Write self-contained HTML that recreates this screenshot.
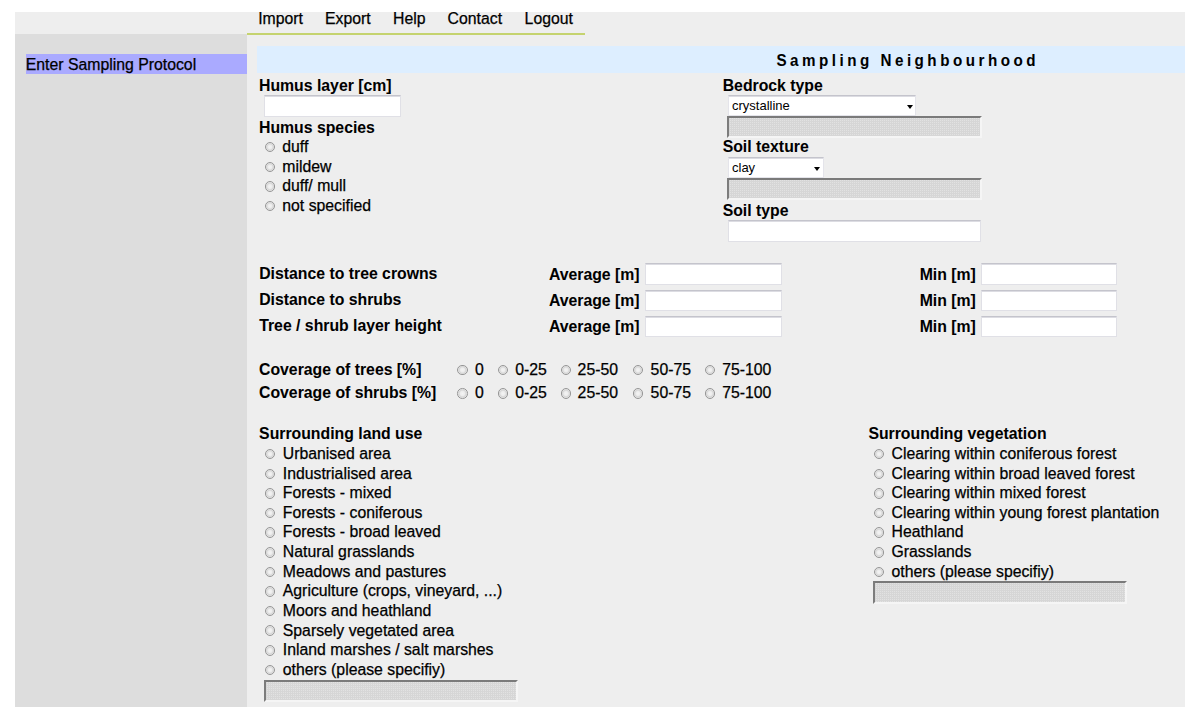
<!DOCTYPE html><html><head><meta charset="utf-8"><style>
*{margin:0;padding:0;box-sizing:border-box}
html,body{width:1200px;height:719px;background:#fff;overflow:hidden;position:relative}
body{font-family:"Liberation Sans",sans-serif;color:#000}
.t{position:absolute;line-height:1;white-space:nowrap;-webkit-text-stroke:0.25px #000}
.topbar{position:absolute;background:#eeeeee}
.side{position:absolute;background:#dddddd}
.main{position:absolute;background:#eeeeee}
.uline{position:absolute;background:#c5d36f;height:2px}
.hl{position:absolute;background:#aaaaff}
.band{position:absolute;background:#ddeeff}
.inp{position:absolute;background:#fff;border:1px solid #e0e0e6;border-top:1px solid #c4c4cc;box-shadow:inset 0 1px 0 #dcdce2}
.dis{position:absolute;background-color:#d6d6d6;background-image:conic-gradient(#e2e2e2 25%,transparent 0);background-size:2px 2px;border-top:2px solid #7a7a7a;border-left:2px solid #7c7c7c;border-right:2px solid #f5f5f5;border-bottom:2px solid #f5f5f5}
.sel{position:absolute;background:#fff;border:1px solid #e4e4ea;border-top:1px solid #c4c4cc;box-shadow:inset 0 1px 0 #dcdce2}
.sel span{position:absolute;left:3px;top:3px;font-size:13px;line-height:1}
.sel i{position:absolute;right:2.5px;top:9px;width:0;height:0;border-left:3.5px solid transparent;border-right:3.5px solid transparent;border-top:4px solid #000}
.r{position:absolute;width:10.5px;height:10.5px;border-radius:50%;border:1.5px solid #969696;background:radial-gradient(circle at 50% 50%,#f4f4f4 0,#ececec 35%,#d6d6d6 55%,#ebebeb 75%,#dcdcdc 100%)}
</style></head><body>
<div class="topbar" style="left:15.00px;top:12.00px;width:1170.00px;height:22.00px"></div>
<div class="side" style="left:15.00px;top:34.00px;width:232.00px;height:673.00px"></div>
<div class="main" style="left:247.00px;top:34.00px;width:938.00px;height:673.00px"></div>
<div class="uline" style="left:247.00px;top:33.00px;width:338.00px;height:2.00px"></div>
<div class="hl" style="left:26.00px;top:54.00px;width:221.00px;height:20.00px"></div>
<div class="band" style="left:257.00px;top:46.00px;width:928.00px;height:26.50px"></div>
<div class="t" style="left:258.20px;top:11.00px;font-size:15.8px;">Import</div>
<div class="t" style="left:325.05px;top:11.00px;font-size:15.8px;">Export</div>
<div class="t" style="left:393.10px;top:11.00px;font-size:15.8px;">Help</div>
<div class="t" style="left:447.60px;top:11.00px;font-size:15.8px;">Contact</div>
<div class="t" style="left:524.60px;top:11.00px;font-size:15.8px;">Logout</div>
<div class="t" style="left:25.80px;top:57.00px;font-size:15.8px;">Enter Sampling Protocol</div>
<div class="t" style="left:776.40px;top:53.00px;font-size:15.2px;font-weight:bold;-webkit-text-stroke:0.05px #000;letter-spacing:3.5px;transform:scaleY(1.1);transform-origin:0 12px;">Sampling Neighbourhood</div>
<div class="t" style="left:259.00px;top:78.00px;font-size:15.8px;font-weight:bold;-webkit-text-stroke:0.05px #000;">Humus layer [cm]</div>
<div class="inp" style="left:264.00px;top:95.00px;width:137.00px;height:22.00px"></div>
<div class="t" style="left:259.00px;top:120.00px;font-size:15.8px;font-weight:bold;-webkit-text-stroke:0.05px #000;">Humus species</div>
<div class="r" style="left:264.80px;top:141.90px"></div>
<div class="t" style="left:282.30px;top:139.00px;font-size:15.8px;">duff</div>
<div class="r" style="left:264.80px;top:161.52px"></div>
<div class="t" style="left:282.30px;top:159.00px;font-size:15.8px;">mildew</div>
<div class="r" style="left:264.80px;top:181.14px"></div>
<div class="t" style="left:282.30px;top:178.00px;font-size:15.8px;">duff/ mull</div>
<div class="r" style="left:264.80px;top:200.76px"></div>
<div class="t" style="left:282.30px;top:198.00px;font-size:15.8px;">not specified</div>
<div class="t" style="left:722.70px;top:78.00px;font-size:15.8px;font-weight:bold;-webkit-text-stroke:0.05px #000;">Bedrock type</div>
<div class="sel" style="left:728px;top:95px;width:188px;height:21px"><span>crystalline</span><i></i></div>
<div class="dis" style="left:727.00px;top:116.00px;width:255.00px;height:22.00px"></div>
<div class="t" style="left:722.70px;top:139.00px;font-size:15.8px;font-weight:bold;-webkit-text-stroke:0.05px #000;">Soil texture</div>
<div class="sel" style="left:728px;top:157px;width:95.5px;height:20.5px"><span>clay</span><i></i></div>
<div class="dis" style="left:727.00px;top:178.00px;width:255.00px;height:22.00px"></div>
<div class="t" style="left:722.70px;top:203.00px;font-size:15.8px;font-weight:bold;-webkit-text-stroke:0.05px #000;">Soil type</div>
<div class="inp" style="left:728.00px;top:220.00px;width:253.00px;height:22.00px"></div>
<div class="t" style="left:259.20px;top:266.00px;font-size:15.8px;font-weight:bold;-webkit-text-stroke:0.05px #000;">Distance to tree crowns</div>
<div class="t" style="left:548.90px;top:267.00px;font-size:15.8px;font-weight:bold;-webkit-text-stroke:0.05px #000;">Average [m]</div>
<div class="inp" style="left:644.60px;top:263.00px;width:137.40px;height:22.00px"></div>
<div class="t" style="left:919.70px;top:267.00px;font-size:15.8px;font-weight:bold;-webkit-text-stroke:0.05px #000;">Min [m]</div>
<div class="inp" style="left:980.70px;top:263.00px;width:136.80px;height:22.00px"></div>
<div class="t" style="left:259.20px;top:292.00px;font-size:15.8px;font-weight:bold;-webkit-text-stroke:0.05px #000;">Distance to shrubs</div>
<div class="t" style="left:548.90px;top:293.00px;font-size:15.8px;font-weight:bold;-webkit-text-stroke:0.05px #000;">Average [m]</div>
<div class="inp" style="left:644.60px;top:289.50px;width:137.40px;height:21.80px"></div>
<div class="t" style="left:919.70px;top:293.00px;font-size:15.8px;font-weight:bold;-webkit-text-stroke:0.05px #000;">Min [m]</div>
<div class="inp" style="left:980.70px;top:289.50px;width:136.80px;height:21.80px"></div>
<div class="t" style="left:259.20px;top:318.00px;font-size:15.8px;font-weight:bold;-webkit-text-stroke:0.05px #000;">Tree / shrub layer height</div>
<div class="t" style="left:548.90px;top:319.00px;font-size:15.8px;font-weight:bold;-webkit-text-stroke:0.05px #000;">Average [m]</div>
<div class="inp" style="left:644.60px;top:315.80px;width:137.40px;height:21.70px"></div>
<div class="t" style="left:919.70px;top:319.00px;font-size:15.8px;font-weight:bold;-webkit-text-stroke:0.05px #000;">Min [m]</div>
<div class="inp" style="left:980.70px;top:315.80px;width:136.80px;height:21.70px"></div>
<div class="t" style="left:259.00px;top:362.00px;font-size:15.8px;font-weight:bold;-webkit-text-stroke:0.05px #000;">Coverage of trees [%]</div>
<div class="r" style="left:457.00px;top:364.70px"></div>
<div class="t" style="left:474.90px;top:362.00px;font-size:15.8px;">0</div>
<div class="r" style="left:497.70px;top:364.70px"></div>
<div class="t" style="left:515.20px;top:362.00px;font-size:15.8px;">0-25</div>
<div class="r" style="left:560.60px;top:364.70px"></div>
<div class="t" style="left:577.60px;top:362.00px;font-size:15.8px;">25-50</div>
<div class="r" style="left:632.60px;top:364.70px"></div>
<div class="t" style="left:650.60px;top:362.00px;font-size:15.8px;">50-75</div>
<div class="r" style="left:704.50px;top:364.70px"></div>
<div class="t" style="left:722.20px;top:362.00px;font-size:15.8px;">75-100</div>
<div class="t" style="left:259.00px;top:385.00px;font-size:15.8px;font-weight:bold;-webkit-text-stroke:0.05px #000;">Coverage of shrubs [%]</div>
<div class="r" style="left:457.00px;top:388.20px"></div>
<div class="t" style="left:474.90px;top:385.00px;font-size:15.8px;">0</div>
<div class="r" style="left:497.70px;top:388.20px"></div>
<div class="t" style="left:515.20px;top:385.00px;font-size:15.8px;">0-25</div>
<div class="r" style="left:560.60px;top:388.20px"></div>
<div class="t" style="left:577.60px;top:385.00px;font-size:15.8px;">25-50</div>
<div class="r" style="left:632.60px;top:388.20px"></div>
<div class="t" style="left:650.60px;top:385.00px;font-size:15.8px;">50-75</div>
<div class="r" style="left:704.50px;top:388.20px"></div>
<div class="t" style="left:722.20px;top:385.00px;font-size:15.8px;">75-100</div>
<div class="t" style="left:259.10px;top:426.00px;font-size:15.8px;font-weight:bold;-webkit-text-stroke:0.05px #000;">Surrounding land use</div>
<div class="r" style="left:264.90px;top:448.90px"></div>
<div class="t" style="left:282.80px;top:446.00px;font-size:15.8px;">Urbanised area</div>
<div class="r" style="left:264.90px;top:468.52px"></div>
<div class="t" style="left:282.80px;top:466.00px;font-size:15.8px;">Industrialised area</div>
<div class="r" style="left:264.90px;top:488.14px"></div>
<div class="t" style="left:282.80px;top:485.00px;font-size:15.8px;">Forests - mixed</div>
<div class="r" style="left:264.90px;top:507.76px"></div>
<div class="t" style="left:282.80px;top:505.00px;font-size:15.8px;">Forests - coniferous</div>
<div class="r" style="left:264.90px;top:527.38px"></div>
<div class="t" style="left:282.80px;top:524.00px;font-size:15.8px;">Forests - broad leaved</div>
<div class="r" style="left:264.90px;top:547.00px"></div>
<div class="t" style="left:282.80px;top:544.00px;font-size:15.8px;">Natural grasslands</div>
<div class="r" style="left:264.90px;top:566.62px"></div>
<div class="t" style="left:282.80px;top:564.00px;font-size:15.8px;">Meadows and pastures</div>
<div class="r" style="left:264.90px;top:586.24px"></div>
<div class="t" style="left:282.80px;top:583.00px;font-size:15.8px;">Agriculture (crops, vineyard, ...)</div>
<div class="r" style="left:264.90px;top:605.86px"></div>
<div class="t" style="left:282.80px;top:603.00px;font-size:15.8px;">Moors and heathland</div>
<div class="r" style="left:264.90px;top:625.48px"></div>
<div class="t" style="left:282.80px;top:623.00px;font-size:15.8px;">Sparsely vegetated area</div>
<div class="r" style="left:264.90px;top:645.10px"></div>
<div class="t" style="left:282.80px;top:642.00px;font-size:15.8px;">Inland marshes / salt marshes</div>
<div class="r" style="left:264.90px;top:664.72px"></div>
<div class="t" style="left:282.80px;top:662.00px;font-size:15.8px;">others (please specifiy)</div>
<div class="dis" style="left:264.00px;top:679.50px;width:254.00px;height:22.00px"></div>
<div class="t" style="left:868.40px;top:426.00px;font-size:15.8px;font-weight:bold;-webkit-text-stroke:0.05px #000;">Surrounding vegetation</div>
<div class="r" style="left:873.90px;top:448.90px"></div>
<div class="t" style="left:891.50px;top:446.00px;font-size:15.8px;">Clearing within coniferous forest</div>
<div class="r" style="left:873.90px;top:468.52px"></div>
<div class="t" style="left:891.50px;top:466.00px;font-size:15.8px;">Clearing within broad leaved forest</div>
<div class="r" style="left:873.90px;top:488.14px"></div>
<div class="t" style="left:891.50px;top:485.00px;font-size:15.8px;">Clearing within mixed forest</div>
<div class="r" style="left:873.90px;top:507.76px"></div>
<div class="t" style="left:891.50px;top:505.00px;font-size:15.8px;">Clearing within young forest plantation</div>
<div class="r" style="left:873.90px;top:527.38px"></div>
<div class="t" style="left:891.50px;top:524.00px;font-size:15.8px;">Heathland</div>
<div class="r" style="left:873.90px;top:547.00px"></div>
<div class="t" style="left:891.50px;top:544.00px;font-size:15.8px;">Grasslands</div>
<div class="r" style="left:873.90px;top:566.62px"></div>
<div class="t" style="left:891.50px;top:564.00px;font-size:15.8px;">others (please specifiy)</div>
<div class="dis" style="left:873.00px;top:581.00px;width:254.00px;height:22.60px"></div>
</body></html>
